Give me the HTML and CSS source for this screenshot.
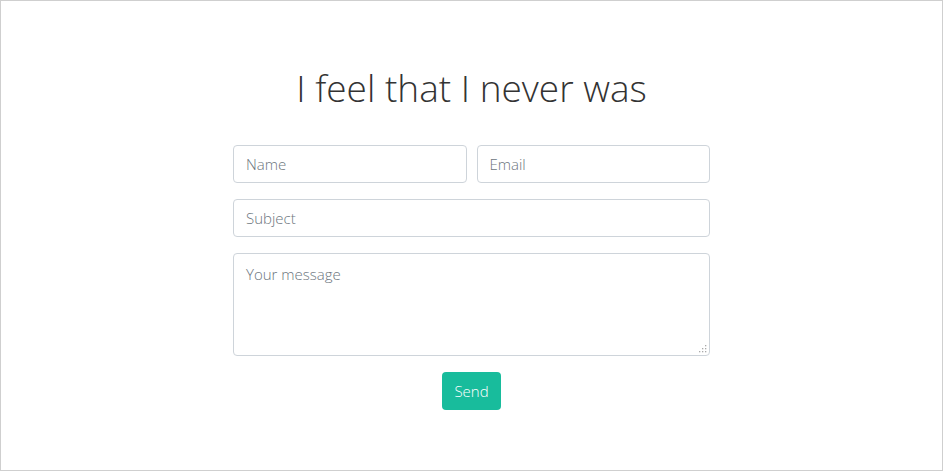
FILE: index.html
```html
<!DOCTYPE html>
<html>
<head>
<meta charset="utf-8">
<link rel="stylesheet" href="styles.css">
</head>
<body>
<div class="frame">
  <h1 class="title">I feel that I never was</h1>
  <form class="form">
    <div class="row">
      <input class="field" type="text" placeholder="Name">
      <input class="field" type="text" placeholder="Email">
    </div>
    <input class="field" type="text" placeholder="Subject">
    <div class="message-wrap">
      <textarea class="field message" placeholder="Your message"></textarea>
      <svg class="grip" width="9" height="9" viewBox="0 0 9 9" aria-hidden="true">
        <rect x="7" y="1" width="1.3" height="1.3" fill="#a9a9a9"/>
        <rect x="7" y="4" width="1.3" height="1.3" fill="#a9a9a9"/>
        <rect x="7" y="7" width="1.3" height="1.3" fill="#a9a9a9"/>
        <rect x="4" y="4" width="1.3" height="1.3" fill="#a9a9a9"/>
        <rect x="4" y="7" width="1.3" height="1.3" fill="#a9a9a9"/>
        <rect x="1" y="7" width="1.3" height="1.3" fill="#a9a9a9"/>
      </svg>
    </div>
    <button class="send" type="button">Send</button>
  </form>
</div>
</body>
</html>
```
FILE: styles.css
```css
* { box-sizing: border-box; }
html, body { margin: 0; padding: 0; height: 100%; }
body { font-family: "Open Sans", sans-serif; background: #fff; }
.frame {
  height: 100%;
  border: 1px solid #cfcfcf;
  display: flex;
  flex-direction: column;
  align-items: center;
}
.title {
  margin: 62px 0 0 0;
  font-weight: 300;
  font-size: 37px;
  line-height: 50px;
  color: #333;
}
.form {
  margin-top: 32px;
  width: 477px;
  display: flex;
  flex-direction: column;
  gap: 16px;
  align-items: center;
}
.row { display: flex; gap: 10px; width: 100%; }
.row .field { flex: 1; min-width: 0; }
.field {
  width: 100%;
  height: 38px;
  border: 1px solid #ced4da;
  border-radius: 4px;
  padding: 6px 12px;
  font-family: "Open Sans", sans-serif;
  font-weight: 300;
  font-size: 15px;
  color: #495057;
  background: #fff;
  outline: none;
}
.field::placeholder { color: #6c757d; opacity: 1; }
.message-wrap { position: relative; width: 100%; height: 103px; }
.message { display: block; height: 103px; padding-top: 10px; resize: none; }
.grip { position: absolute; right: 3px; bottom: 3px; }
.send {
  width: 59px;
  height: 38px;
  border: 0;
  border-radius: 4px;
  background: #18bc9c;
  color: #fff;
  font-family: "Open Sans", sans-serif;
  font-weight: 300;
  font-size: 15px;
  padding: 0;
}
```
